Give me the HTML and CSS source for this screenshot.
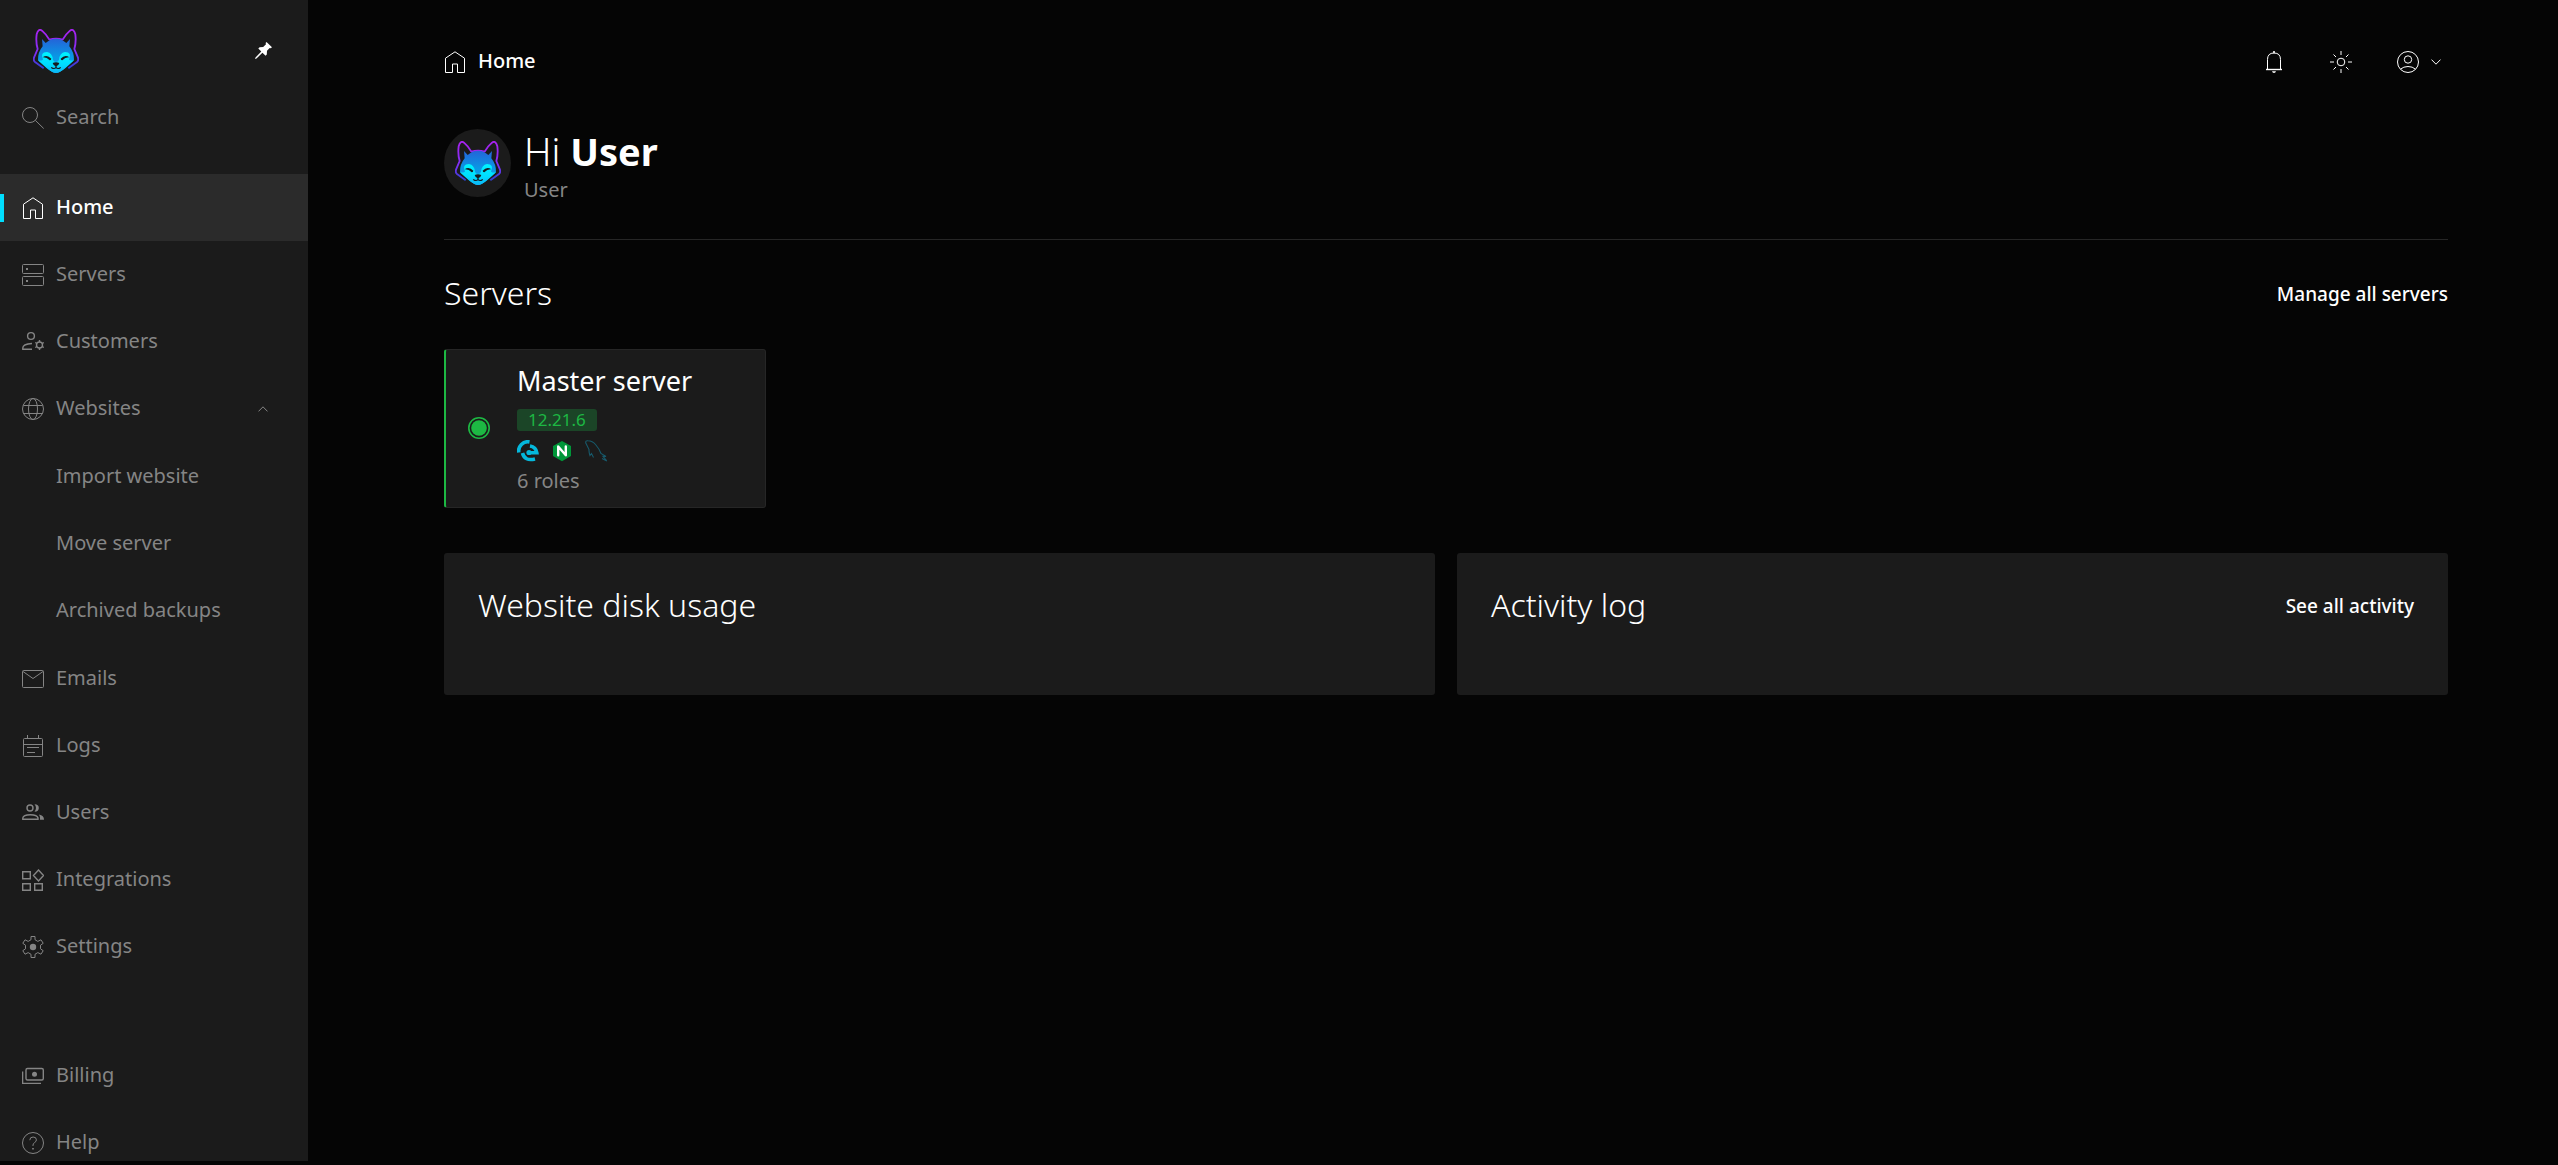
FILE: index.html
```html
<!DOCTYPE html>
<html lang="en">
<head>
<meta charset="utf-8">
<meta name="viewport" content="width=device-width, initial-scale=1">
<title>Home</title>
<link rel="stylesheet" href="styles.css">
</head>
<body>
<svg class="defs" width="0" height="0" aria-hidden="true">
  <defs>
    <linearGradient id="fox-face" x1="0" y1="0" x2="0" y2="1">
      <stop offset="0" stop-color="#2563d8"/><stop offset=".5" stop-color="#0a96e4"/><stop offset="1" stop-color="#08a8f0"/>
    </linearGradient>
    <linearGradient id="fox-line" x1="0" y1="0" x2="0" y2="1">
      <stop offset="0" stop-color="#a822f0"/><stop offset=".6" stop-color="#8030f4"/><stop offset="1" stop-color="#2f3fd0"/>
    </linearGradient>
    <linearGradient id="fox-muzzle" x1="0" y1="0" x2="0" y2="1">
      <stop offset="0" stop-color="#00f4ff"/><stop offset=".6" stop-color="#00dcff"/><stop offset="1" stop-color="#0cb4f4"/>
    </linearGradient>
  </defs>
  <symbol id="fox" viewBox="0 0 138 132">
    <path d="M32 118 L5 98 Q1 94 3 86 L14 60 Q8 40 11 16 Q16 -3 27 5 Q40 16 49 32 Q69 26 89 32 Q98 16 111 5 Q122 -3 127 16 Q130 40 124 60 L135 86 Q137 94 133 98 L106 118" fill="none" stroke="url(#fox-line)" stroke-width="5.500" stroke-linejoin="round"/>
    <path d="M15 94 Q14 70 29 52 L27 30 L38 42 Q52 29 69 29 Q86 29 100 42 L111 30 L109 52 Q124 70 123 94 L96 118 Q80 132 69 132 Q58 132 42 118 Z" fill="url(#fox-face)"/>
    <path d="M15 94 Q24 96 30 92 Q20 70 42 69 Q58 72 60 92 Q62 99 69 99 Q76 99 78 92 Q80 72 96 69 Q118 70 108 92 Q114 96 123 94 L96 118 Q80 132 69 132 Q58 132 42 118 Z" fill="url(#fox-muzzle)"/>
    <path d="M29 85 Q42 75 55 89 Q54 94 50 94 Q41 84 29 85Z M109 85 Q96 75 83 89 Q84 94 88 94 Q97 84 109 85Z M59 102 Q69 97 79 102 Q77 109 71 111 V116 H67 V111 Q61 109 59 102Z" fill="#151b22"/>
    <path d="M56 116 Q63 121 69 116 Q75 121 82 116" fill="none" stroke="#151b22" stroke-width="3.5" stroke-linecap="round"/>
  </symbol>
  <symbol id="i-home" viewBox="0 0 22 22"><path d="M1.5 21.5V7.2L11 .8l9.500 6.400V21.500H13.500V13H8.500v8.500z"/></symbol>
  <symbol id="i-chevron" viewBox="0 0 10 6"><path d="M.5.6 5 5.200 9.500.6"/></symbol>
</svg>

<div class="app">
  <aside class="sidebar">
    <div class="brand">
      <a href="#" aria-label="Dashboard"><svg class="fox"><use href="#fox"/></svg></a>
      <button class="pin" type="button" aria-label="Unpin menu">
        <svg width="17" height="17" viewBox="0 0 17 17"><path fill="#fff" d="M11.500 0 17 5.200 15.700 6.300 14.700 6 12 8.800 11.800 12.500 10.600 13.700 7.400 10.700 1.500 16.500 0 17 .5 15.500 6.300 9.600 3.300 6.500 4.600 5.300 8.200 5.100 11 2.300 10.600 1z"/></svg>
      </button>
    </div>
    <label class="search">
      <svg class="icon" viewBox="0 0 22 22"><circle cx="8" cy="8" r="7.500"/><path d="M13.300 13.300 21.700 21.500"/></svg>
      <input type="search" placeholder="Search" aria-label="Search">
    </label>
    <nav class="nav">
      <a class="item active" href="#"><svg class="icon"><use href="#i-home"/></svg><span>Home</span></a>
      <a class="item" href="#"><svg class="icon" viewBox="0 0 22 22"><rect x=".5" y=".5" width="21" height="9" rx="1"/><rect x=".5" y="12.500" width="21" height="9" rx="1"/><path class="solid" d="M4 4h2v2H4zM4 16h2v2H4z"/></svg><span>Servers</span></a>
      <a class="item" href="#"><svg class="icon bold" viewBox="0 0 22 22"><circle cx="9" cy="5" r="3.400"/><path d="M10 12.500Q.8 13 .8 17v1.200H10"/><circle cx="17.500" cy="14" r="3"/><path d="M17.500 9v2M17.500 17v2M13.200 11.500l1.800 1M20 15.500l1.800 1M21.800 11.500 20 12.500M15 15.500l-1.800 1"/></svg><span>Customers</span></a>
      <a class="item" href="#"><svg class="icon" viewBox="0 0 22 22"><circle cx="11" cy="11" r="10.500"/><ellipse cx="11" cy="11" rx="4.500" ry="10.500"/><path d="M1.500 7.500h19M1.500 15.500h19"/></svg><span>Websites</span><svg class="chevron up"><use href="#i-chevron"/></svg></a>
      <div class="submenu">
        <a class="item" href="#"><span>Import website</span></a>
        <a class="item" href="#"><span>Move server</span></a>
        <a class="item" href="#"><span>Archived backups</span></a>
      </div>
      <a class="item" href="#"><svg class="icon" viewBox="0 0 22 22"><rect x=".5" y="2.500" width="21" height="17" rx="1"/><path d="M1 3.500 11 10.500 21 3.500"/></svg><span>Emails</span></a>
      <a class="item" href="#"><svg class="icon" viewBox="0 0 22 22"><rect x="1.500" y="3.500" width="19" height="18" rx="1"/><path d="M1.500 9.500h19M5.500 0v3.500M16.500 0v3.500M5 12.500h12M5 17.500h8"/></svg><span>Logs</span></a>
      <a class="item" href="#"><svg class="icon bold" viewBox="0 0 22 22"><circle cx="8" cy="6" r="3"/><path d="M.8 17.200V16q.5-3.300 7.500-3.300T16 16v1.200z"/><path class="solid" d="M12.500 2.300q4.300 0 4.300 3.700t-4.300 3.700q3-3.700 0-7.400zM17 12.500q5 1 5 5.300h-4q.3-3.500-1-5.300z"/></svg><span>Users</span></a>
      <a class="item" href="#"><svg class="icon bold" viewBox="0 0 22 22"><path d="M.7 2.700h7.600v7H.7zM.7 14.700h7.600v6.600H.7zM12.700 14.700h7.600v6.600h-7.600zM16.500 1l5 5.500-5 5.500-5-5.500z"/></svg><span>Integrations</span></a>
      <a class="item" href="#"><svg class="icon" viewBox="0 0 22 22"><path d="M9 .5h4v3.200l2.800 1.700L19 3.800l2.200 3.500L18.500 9.200v3.600l2.700 1.900-2.200 3.500-3.200-1.600-2.800 1.700v3.200H9v-3.200l-2.800-1.700L3 18.200.8 14.700l2.700-1.900V9.200L.8 7.300 3 3.800l3.200 1.600L9 3.700z"/><circle class="solid" cx="11" cy="11" r="3.200"/></svg><span>Settings</span></a>
      <div class="secondary">
        <a class="item" href="#"><svg class="icon bold" viewBox="0 0 22 22"><rect x="4" y="3.500" width="17.300" height="11.500" rx="1.500"/><circle class="solid" cx="12.500" cy="9.300" r="2.500"/><path d="M.6 6.500V18.400H19"/></svg><span>Billing</span></a>
        <a class="item" href="#"><svg class="icon" viewBox="0 0 22 22"><circle cx="11" cy="11" r="10.500"/><path d="M7.800 8.200q0-3.200 3.300-3.200t3.300 2.800q0 1.700-1.700 2.700-1.700.9-1.700 2.700v.8"/><path class="solid" d="M10.200 16h1.600v1.600h-1.600z"/></svg><span>Help</span></a>
      </div>
    </nav>
  </aside>

  <main class="main">
    <header class="topbar">
      <a class="crumb" href="#"><svg class="icon"><use href="#i-home"/></svg><span>Home</span></a>
      <div class="actions">
        <button type="button" aria-label="Notifications"><svg class="icon" viewBox="0 0 22 22"><path d="M4.500 18.500V8.500Q4.500 2 11 2t6.500 6.500v10"/><path d="M3 18.500h16" stroke-width="1.400"/><path class="solid" d="M10.200 0h1.600v2.300h-1.600zM9 20.300h4q-.4 1.700-2 1.700t-2-1.700z"/></svg></button>
        <button type="button" aria-label="Theme"><svg class="icon" viewBox="0 0 22 22"><circle cx="11" cy="11" r="3.800"/><path d="M11 0v4M11 18v4M0 11h4M18 11h4M3.500 3.500 6 6M16 16l2.500 2.500M18.500 3.500 16 6M6 16l-2.500 2.500"/></svg></button>
        <button type="button" aria-label="Account"><svg class="icon" viewBox="0 0 22 22"><circle cx="11" cy="11" r="10.500"/><circle cx="11" cy="8.500" r="3.700"/><path d="M3.500 18.200Q6.500 15.500 11 15.500t7.500 2.700"/></svg><svg class="chevron"><use href="#i-chevron"/></svg></button>
      </div>
    </header>

    <section class="greeting">
      <div class="avatar"><svg class="fox"><use href="#fox"/></svg></div>
      <div>
        <h1>Hi <b>User</b></h1>
        <p>User</p>
      </div>
    </section>

    <section class="servers">
      <div class="heading">
        <h2>Servers</h2>
        <a href="#">Manage all servers</a>
      </div>
      <a class="server" href="#">
        <svg class="status" viewBox="0 0 22 22" aria-label="Online"><circle cx="11" cy="11" r="10.200" fill="none" stroke="#1db843" stroke-width="1.600"/><circle cx="11" cy="11" r="7.800" fill="#1db843"/></svg>
        <div class="details">
          <h3>Master server</h3>
          <span class="version">12.21.6</span>
          <div class="roles">
            <svg viewBox="0 0 22 22"><g fill="none" stroke="#05b8dc" stroke-width="3.600"><path d="M1.800 12.500A9.200 9.200 0 0 1 12.500 1.900"/><path d="M13 6Q19 7 19.800 12.700H11"/><path d="M5.500 13Q7.500 21.500 18 19"/></g><circle cx="12" cy="12.500" r="2.600" fill="#05b8dc"/></svg>
            <svg viewBox="0 0 22 22"><path fill="#009639" d="M11 1 20 6v10l-9 5.200L2 16V6z"/><path fill="none" stroke="#fff" stroke-width="2.400" stroke-linecap="round" stroke-linejoin="round" d="M7.200 15.300V6.500L14.800 15.300V6.500"/></svg>
            <svg viewBox="0 0 22 22"><path fill="none" stroke="#17596b" stroke-width="1.100" d="M8.500 17.500 6.500 13.500 5 15.500Q3.800 12 4 9.500L.8 3Q.3.500 3 .8 7.500 1 10.500 4.500 14.500 9 16 13.500L21 16.500 18 16.300 21.800 21 17 18.500"/></svg>
          </div>
          <p>6 roles</p>
        </div>
      </a>
    </section>

    <div class="panels">
      <section class="panel"><h2>Website disk usage</h2></section>
      <section class="panel"><h2>Activity log</h2><a href="#">See all activity</a></section>
    </div>
  </main>
</div>
</body>
</html>
```

FILE: styles.css
```css
:root {
  --page: #050505;
  --surface: #1b1b1b;
  --surface-active: #2b2b2b;
  --line: #262626;
  --muted: #858585;
  --green: #1db843;
}

* { box-sizing: border-box; }

body {
  margin: 0;
  background: var(--page);
  color: #fff;
  font: 400 20px/24px "Noto Sans", sans-serif;
}

h1, h2, h3, p { margin: 0; }
a { color: inherit; text-decoration: none; }
button { padding: 0; border: 0; background: none; color: inherit; font: inherit; }
svg { display: block; flex: none; }
.defs { position: absolute; }

.icon, .chevron {
  width: 22px;
  height: 22px;
  fill: none;
  stroke: currentColor;
  stroke-width: 1;
}
.icon.bold { stroke-width: 1.4; }
.icon .solid { fill: currentColor; stroke: none; }
.chevron { width: 10px; height: 6px; }
.chevron.up { transform: rotate(180deg); margin-left: auto; }
.fox { width: 46px; height: 44px; }

.app { display: flex; height: 100vh; }

/* Sidebar */
.sidebar {
  flex: none;
  width: 308px;
  margin-bottom: 4px;
  overflow: hidden;
  background: var(--surface);
  color: var(--muted);
}
.brand {
  display: flex;
  align-items: center;
  justify-content: space-between;
  height: 84px;
  padding: 17px 36px 0 33px;
}
.search {
  display: flex;
  align-items: center;
  gap: 12px;
  height: 67px;
  padding-left: 22px;
}
.search input {
  min-width: 0;
  padding: 0 0 2px;
  border: 0;
  outline: 0;
  background: none;
  color: inherit;
  font: inherit;
}
.search input::placeholder { color: inherit; opacity: 1; }
.nav { margin-top: 23px; }
.item {
  position: relative;
  display: flex;
  align-items: center;
  gap: 12px;
  height: 67px;
  padding: 0 40px 0 22px;
}
.item span, .crumb span { padding-bottom: 2px; }
.item.active { background: var(--surface-active); color: #fff; font-weight: 500; }
.item.active::before {
  content: "";
  position: absolute;
  left: 0;
  width: 4px;
  height: 28px;
  background: #00dfff;
}
.submenu { margin: 1px 0; }
.submenu .item { padding-left: 56px; }
.secondary { margin-top: 62px; }

/* Content */
.main { flex: 1; min-width: 0; padding: 0 110px 0 136px; overflow: auto; }

.topbar {
  display: flex;
  align-items: center;
  justify-content: space-between;
  height: 124px;
}
.crumb { display: flex; align-items: center; gap: 12px; font-weight: 500; }
.actions { display: flex; gap: 45px; padding-right: 7px; }
.actions button { display: flex; align-items: center; gap: 12px; }

.greeting {
  display: flex;
  align-items: flex-start;
  gap: 13px;
  height: 116px;
  padding-top: 5px;
  border-bottom: 1px solid var(--line);
}
.avatar {
  display: grid;
  place-items: center;
  width: 67px;
  height: 68px;
  border-radius: 50%;
  background: var(--surface);
}
.greeting h1 { font-size: 38px; line-height: 44px; font-weight: 300; margin-bottom: 5px; }
.greeting b { font-weight: 700; }
.greeting p { color: var(--muted); }

h2 { font-size: 32px; line-height: 44px; font-weight: 300; }
.heading, .panel { display: flex; justify-content: space-between; }
.heading { align-items: center; margin: 31px 0 34px; }
.heading a, .panel a { padding-top: 1px; font-size: 19px; font-weight: 500; line-height: 44px; }
.heading a { margin-bottom: -1px; }

.server {
  display: flex;
  align-items: center;
  gap: 27px;
  width: 322px;
  height: 159px;
  padding: 0 22px 2px;
  border: 1px solid var(--line);
  border-left: 2px solid var(--green);
  border-radius: 3px;
  background: var(--surface);
}
.status, .roles svg { width: 22px; height: 22px; }
.details { display: flex; flex-direction: column; align-items: flex-start; }
.server h3 { font-size: 27px; line-height: 36px; font-weight: 400; margin-bottom: 10px; }
.version {
  padding: 0 11px;
  border-radius: 3px;
  background: #1b4527;
  color: var(--green);
  font-size: 17px;
  line-height: 22px;
}
.roles { display: flex; gap: 12px; margin: 9px 0 7px; }
.server p { color: var(--muted); }

.panels { display: grid; grid-template-columns: 1fr 1fr; gap: 22px; margin-top: 45px; }
.panel {
  align-items: flex-start;
  min-height: 142px;
  padding: 30px 34px;
  border-radius: 3px;
  background: var(--surface);
}
```
